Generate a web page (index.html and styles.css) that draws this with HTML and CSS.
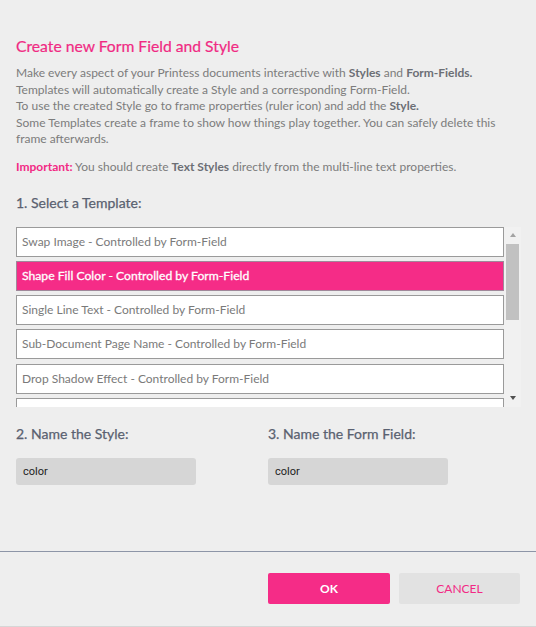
FILE: index.html
```html
<!DOCTYPE html>
<html>
<head>
<meta charset="utf-8">
<link rel="stylesheet" href="styles.css">
</head>
<body>
<div class="dialog">
  <div class="content">
    <h1 class="title">Create new Form Field and Style</h1>
    <p class="intro">Make every aspect of your Printess documents interactive with <b>Styles</b> and <b>Form-Fields.</b><br>
    Templates will automatically create a Style and a corresponding Form-Field.<br>
    To use the created Style go to frame properties (ruler icon) and add the <b>Style.</b><br>
    Some Templates create a frame to show how things play together. You can safely delete this frame afterwards.</p>
    <p class="note"><span class="important">Important:</span> You should create <b>Text Styles</b> directly from the multi-line text properties.</p>

    <h2 class="label">1. Select a Template:</h2>
    <div class="listbox">
      <div class="items">
        <div class="item">Swap Image - Controlled by Form-Field</div>
        <div class="item selected">Shape Fill Color - Controlled by Form-Field</div>
        <div class="item">Single Line Text - Controlled by Form-Field</div>
        <div class="item">Sub-Document Page Name - Controlled by Form-Field</div>
        <div class="item">Drop Shadow Effect - Controlled by Form-Field</div>
        <div class="item"></div>
      </div>
      <div class="scrollbar">
        <div class="arrow up"></div>
        <div class="track"><div class="thumb"></div></div>
        <div class="arrow down"></div>
      </div>
    </div>

    <div class="fields">
      <div class="field">
        <h2 class="label">2. Name the Style:</h2>
        <div class="input">color</div>
      </div>
      <div class="field">
        <h2 class="label">3. Name the Form Field:</h2>
        <div class="input">color</div>
      </div>
    </div>
  </div>
  <div class="footer">
    <button class="btn ok">OK</button>
    <button class="btn cancel">CANCEL</button>
  </div>
</div>
</body>
</html>
```

FILE: styles.css
```css
html, body {
  margin: 0;
  padding: 0;
  background: #eeeeee;
}
body {
  font-family: Lato, "Noto Sans", sans-serif;
  width: 536px;
  height: 627px;
  overflow: hidden;
}
.dialog {
  height: 626px;
  display: flex;
  flex-direction: column;
  border-bottom: 1px solid #d6d6d6;
}
.content {
  padding: 36px 16px 0 16px;
  height: 528px;
  box-sizing: border-box;
}
.title {
  margin: 0;
  font-size: 15.7px;
  font-weight: 400;
  line-height: 20px;
  color: #f02a83;
  -webkit-text-stroke: 0.2px #f02a83;
}
.intro {
  margin: 9px 0 0 0;
  font-size: 12px;
  line-height: 16.5px;
  color: #7c7c7c;
}
.intro b, .note b {
  font-weight: 700;
  color: #6c6f75;
}
.note {
  margin: 11px 0 0 0;
  font-size: 12px;
  line-height: 16px;
  color: #7c7c7c;
}
.important {
  color: #f22a85;
  font-weight: 700;
}
.label {
  margin: 0;
  font-size: 14px;
  font-weight: 400;
  line-height: 18px;
  color: #5a6170;
  -webkit-text-stroke: 0.25px #5a6170;
}
.content > .label {
  margin-top: 19px;
}
.listbox {
  margin-top: 15px;
  height: 180px;
  display: flex;
  overflow: hidden;
  margin-right: -1px;
}
.items {
  flex: 1;
  display: flex;
  flex-direction: column;
  gap: 4.3px;
}
.item {
  flex: none;
  height: 30px;
  box-sizing: border-box;
  border: 1px solid #9a9a9a;
  background: #ffffff;
  font-size: 12px;
  line-height: 28px;
  padding-left: 5px;
  color: #7a7a7a;
  white-space: nowrap;
}
.item.selected {
  background: #f52c87;
  color: #ffffff;
  border-color: #a0889a;
  font-size: 12.2px;
  -webkit-text-stroke: 0.3px #ffffff;
}
.scrollbar {
  width: 17px;
  flex: none;
  background: #f1f1f1;
  display: flex;
  flex-direction: column;
  align-items: center;
}
.arrow {
  height: 17px;
  width: 17px;
  flex: none;
  display: flex;
  align-items: center;
  justify-content: center;
}
.arrow::before {
  content: "";
  width: 0;
  height: 0;
  border-left: 3.5px solid transparent;
  border-right: 3.5px solid transparent;
}
.arrow.up::before {
  border-bottom: 4px solid #a3a3a3;
}
.arrow.down::before {
  border-top: 4px solid #505050;
}
.track {
  flex: 1;
  width: 100%;
  display: flex;
  justify-content: center;
}
.thumb {
  width: 13px;
  height: 76px;
  background: #c1c1c1;
}
.fields {
  margin-top: 18px;
  display: grid;
  grid-template-columns: 252px 252px;
}
.field .input {
  margin-top: 15px;
  width: 180px;
  height: 27px;
  box-sizing: border-box;
  border-radius: 3px;
  background: #d6d6d6;
  font-family: Roboto, Arial, sans-serif;
  font-size: 11px;
  line-height: 27px;
  padding-left: 7px;
  color: #222222;
}
.footer {
  border-top: 1px solid #8d95a7;
  margin-top: 23px;
  padding: 21px 16px 0 268px;
  display: flex;
  gap: 9px;
}
.btn {
  height: 31px;
  width: 122px;
  border: none;
  border-radius: 2px;
  font-family: Lato, "Noto Sans", sans-serif;
  font-size: 12px;
  padding: 0;
  cursor: pointer;
}
.btn.ok {
  background: #f52c87;
  color: #ffffff;
  font-weight: 700;
}
.btn.cancel {
  background: #e2e2e2;
  color: #f22a85;
  width: 121px;
}
```
